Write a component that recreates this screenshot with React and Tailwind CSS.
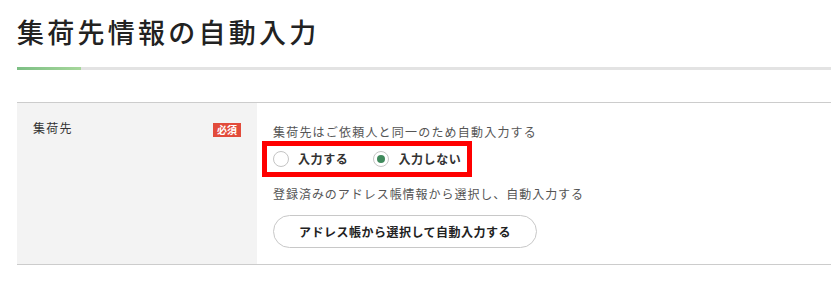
export default function App() {
  return (
    <div
      className="w-[831px] h-[286px] overflow-hidden bg-white pl-[17px] pt-[12px] text-[#333]"
      style={{ fontFamily: '"Noto Sans CJK JP", "Noto Sans", sans-serif' }}
    >
      <h1 className="text-[27px] leading-[40px] font-medium tracking-[0.12em] text-[#222]">
        集荷先情報の自動入力
      </h1>
      <div className="mt-[15px] flex h-[3px] bg-[#e3e3e3]">
        <div className="w-[64px] h-full bg-gradient-to-r from-[#7cbf84] to-[#a6d79b]" />
      </div>
      <div className="mt-[32px] flex border-y border-[#cccccc]">
        <div className="w-[240px] shrink-0 bg-[#f3f3f3] pl-[16px] pr-[16px] pt-[16px] flex justify-between items-start">
          <span className="text-[12px] leading-[18px] tracking-[0.1em] text-[#333]">集荷先</span>
          <span className="mt-[4px] w-[28px] h-[14px] flex items-center justify-center bg-[#e24b3b] text-white text-[10px] leading-none font-bold">
            必須
          </span>
        </div>
        <div className="flex-1 pl-[16px] pt-[20px] pb-[16px]">
          <p className="text-[12px] leading-[18px] tracking-[0.1em] text-[#555]">
            集荷先はご依頼人と同一のため自動入力する
          </p>
          <div className="-ml-[11px] w-[210px] h-[36px] border-[5px] border-[#ff0000] flex items-center pl-[6px]">
            <label className="flex items-center">
              <span className="w-[16px] h-[16px] rounded-full border border-[#c4c4c4] bg-white" />
              <span className="ml-[9px] text-[12px] font-bold tracking-[0.05em] text-[#333]">入力する</span>
            </label>
            <label className="flex items-center ml-[25px]">
              <span className="w-[16px] h-[16px] rounded-full border border-[#c4c4c4] bg-white flex items-center justify-center">
                <span className="w-[8px] h-[8px] rounded-full bg-[#3f8a5c]" />
              </span>
              <span className="ml-[9px] text-[12px] font-bold tracking-[0.05em] text-[#333]">入力しない</span>
            </label>
          </div>
          <p className="mt-[8px] text-[12px] leading-[18px] tracking-[0.08em] text-[#555]">
            登録済みのアドレス帳情報から選択し、自動入力する
          </p>
          <button className="mt-[12px] w-[264px] h-[33px] rounded-full border border-[#c8c8c8] bg-white text-[12px] font-bold tracking-[0.04em] text-[#222]">
            アドレス帳から選択して自動入力する
          </button>
        </div>
      </div>
    </div>
  );
}
